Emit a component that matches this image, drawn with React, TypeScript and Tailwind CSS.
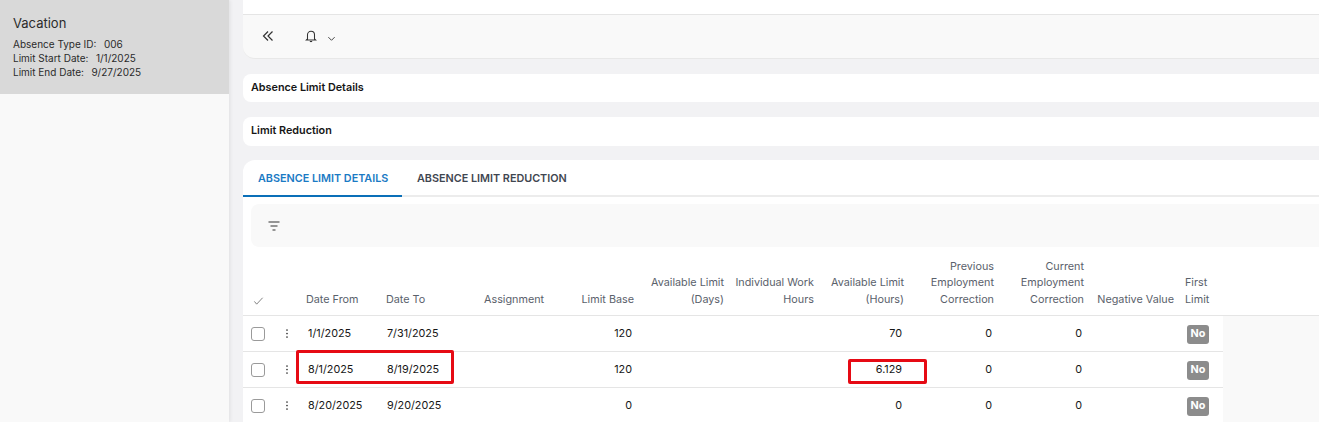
const rows = [
  { from: '1/1/2025', to: '7/31/2025', base: '120', hours: '70', prev: '0', cur: '0' },
  { from: '8/1/2025', to: '8/19/2025', base: '120', hours: '6.129', prev: '0', cur: '0' },
  { from: '8/20/2025', to: '9/20/2025', base: '0', hours: '0', prev: '0', cur: '0' },
];

const gridCols =
  'grid grid-cols-[30px_27px_80px_98px_70px_92px_90px_90px_90px_90px_90px_90px_43px_1fr]';

const headCell = 'pr-1.5 pb-[7px] self-end text-right';
const cell = 'flex h-full items-center border-b border-[#e5e5e5] pt-0.5';
const numCell = `${cell} justify-end pr-2`;

export default function App() {
  return (
    <div className="flex h-[422px] w-[1319px] overflow-hidden bg-[#f2f2f4] font-['Inter',sans-serif] text-[10.8px] text-[#161616]">
      {/* Left panel */}
      <div className="relative w-[229px] shrink-0 bg-[#f9f9f9] shadow-[1px_0_4px_rgba(0,0,0,0.08)]">
        <div className="h-[94px] bg-[#d9d9d9] pl-[13px] pt-[14px] text-[#2b2b2b]">
          <div className="text-[13px] leading-[18px]">Vacation</div>
          <div className="mt-[5px] text-[10px] leading-[14px]">
            <div>Absence Type ID:<span className="ml-[7.5px]">006</span></div>
            <div>Limit Start Date:<span className="ml-[7.5px]">1/1/2025</span></div>
            <div>Limit End Date:<span className="ml-[7.5px]">9/27/2025</span></div>
          </div>
        </div>
      </div>

      {/* Main */}
      <div className="relative min-w-0 flex-1 pl-[14px]">
        <div className="h-[59px] rounded-bl-xl border-b border-[#e8e8e8] bg-[#f9f9f9]">
          <div className="h-[15px] border-b border-[#e5e5e5] bg-white" />
          <div className="flex h-[42px] items-center pl-[19px] text-[#333]">
            <svg width="12" height="12" viewBox="0 0 12 12" fill="none" stroke="currentColor" strokeWidth="1.2">
              <path d="M6 1.5 1.5 6 6 10.5M10.5 1.5 6 6l4.5 4.5" />
            </svg>
            <svg className="ml-[30px]" width="14" height="14" viewBox="0 0 24 24" fill="none" stroke="currentColor" strokeWidth="1.8">
              <path d="M6 17V10a6 6 0 0 1 12 0v7l2 2H4l2-2Z" />
              <path d="M10 21.5h4" />
            </svg>
            <svg className="ml-[9px] mt-[4px]" width="9" height="9" viewBox="0 0 10 10" fill="none" stroke="currentColor" strokeWidth="1">
              <path d="M1.5 3.5 5 7l3.5-3.5" />
            </svg>
          </div>
        </div>

        <div className="mt-[15px] flex h-[28px] items-center rounded-l-lg bg-white pl-2 font-semibold">
          Absence Limit Details
        </div>
        <div className="mt-[15px] flex h-[29px] items-center rounded-l-lg bg-white pl-2 font-semibold">
          Limit Reduction
        </div>

        {/* Tabs card */}
        <div className="mt-[14px] rounded-tl-xl bg-white">
          <div className="flex h-[37px] border-b-2 border-[#ececec] font-semibold">
            <div className="-mb-0.5 flex w-[159px] items-center border-b-2 border-[#0a6fb8] pl-[15px] pt-1 text-[#1a7ac4]">
              ABSENCE LIMIT DETAILS
            </div>
            <div className="flex items-center pl-[15px] pt-1 text-[#3f4650]">ABSENCE LIMIT REDUCTION</div>
          </div>

          <div className="ml-2 mt-[7px] flex h-[43px] items-center rounded-l-lg bg-[#f9f9f9] pl-[17px] text-[#333]">
            <svg width="12" height="10" viewBox="0 0 12 10" fill="none" stroke="currentColor" strokeWidth="1.2">
              <path d="M0.5 1h11M2.5 5h7M4.5 9h3" />
            </svg>
          </div>

          {/* Table header */}
          <div className={`${gridCols} h-[69px] border-b border-[#e5e5e5] leading-[16.5px] text-[#5a616b]`}>
            <div className="self-end pb-[9px] pl-[10px] text-[#555]">
              <svg width="11" height="11" viewBox="0 0 12 12" fill="none" stroke="currentColor" strokeWidth="0.8">
                <path d="M1.5 7 4 10l6.5-7" />
              </svg>
            </div>
            <div />
            <div className="self-end px-1.5 pb-[7px]">Date From</div>
            <div className="self-end px-1.5 pb-[7px]">Date To</div>
            <div className="self-end px-1.5 pb-[7px]">Assignment</div>
            <div className={headCell}>Limit Base</div>
            <div className={headCell}>Available Limit (Days)</div>
            <div className={headCell}>Individual Work Hours</div>
            <div className={headCell}>Available Limit (Hours)</div>
            <div className={headCell}>Previous Employment Correction</div>
            <div className={headCell}>Current Employment Correction</div>
            <div className={`${headCell} whitespace-nowrap`}>Negative Value</div>
            <div className="self-end pb-[7px] pl-[5px]">First Limit</div>
            <div />
          </div>

          {/* Table rows */}
          {rows.map((r) => (
            <div key={r.from} className={`${gridCols} h-[36px] items-center`}>
              <div className="flex h-full items-center border-b border-[#e5e5e5] pl-2">
                <div className="size-[14px] rounded-[3px] border border-[#9a9a9a] bg-white" />
              </div>
              <div className="flex h-full items-center border-b border-[#e5e5e5] pl-[12px] text-[#333]">
                <svg width="4" height="9" viewBox="0 0 4 9" fill="currentColor">
                  <circle cx="2" cy="1" r="0.85" />
                  <circle cx="2" cy="4.5" r="0.85" />
                  <circle cx="2" cy="8" r="0.85" />
                </svg>
              </div>
              <div className={`${cell} pl-2`}>{r.from}</div>
              <div className={`${cell} pl-[7px]`}>{r.to}</div>
              <div className="h-full border-b border-[#e5e5e5]" />
              <div className={numCell}>{r.base}</div>
              <div className="h-full border-b border-[#e5e5e5]" />
              <div className="h-full border-b border-[#e5e5e5]" />
              <div className={numCell}>{r.hours}</div>
              <div className={numCell}>{r.prev}</div>
              <div className={numCell}>{r.cur}</div>
              <div className="h-full border-b border-[#e5e5e5]" />
              <div className={`${cell} pl-[7px]`}>
                <span className="flex h-[19px] w-[22px] items-center justify-center rounded-[3px] bg-[#8c8c8c] font-bold text-white">
                  No
                </span>
              </div>
              <div className="h-full bg-[#f9f9f9]" />
            </div>
          ))}
        </div>

        {/* Red highlight annotations */}
        <div className="absolute left-[67px] top-[350px] h-[34px] w-[158px] rounded-[2px] border-[3px] border-[#e60a14]" />
        <div className="absolute left-[619px] top-[359px] h-[25px] w-[79px] rounded-[2px] border-[3px] border-[#e60a14]" />
      </div>
    </div>
  );
}
